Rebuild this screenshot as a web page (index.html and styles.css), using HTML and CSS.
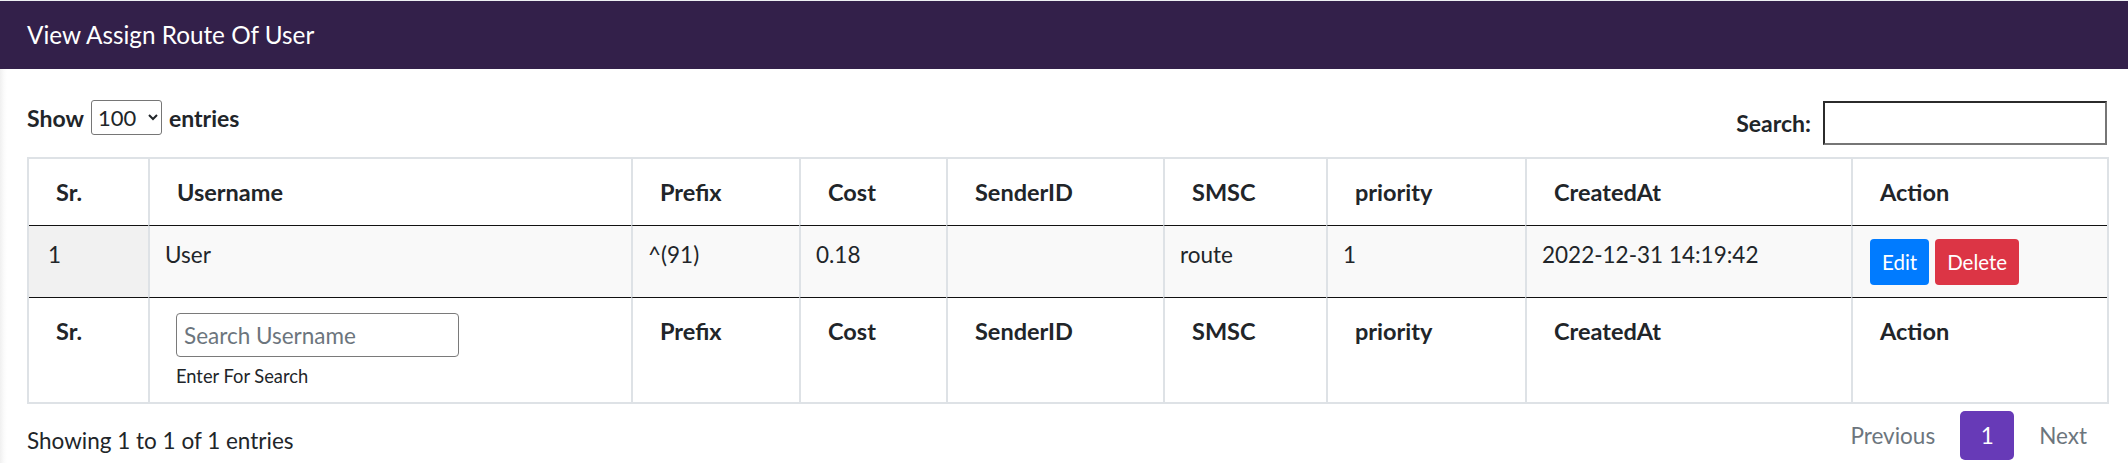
FILE: index.html
```html
<!DOCTYPE html>
<html lang="en">
<head>
<meta charset="utf-8">
<title>View Assign Route Of User</title>
<link rel="stylesheet" href="styles.css">
</head>
<body>
<div class="card">
  <div class="card-header">
    <h3 class="card-title">View Assign Route Of User</h3>
  </div>
  <div class="card-body">
    <div class="dt-top">
      <label class="dt-length">Show
        <select class="dt-select">
          <option>10</option>
          <option>25</option>
          <option>50</option>
          <option selected>100</option>
        </select>
        entries</label>
      <label class="dt-filter">Search: <input type="search" class="dt-search"></label>
    </div>
    <table class="dt-table">
      <colgroup>
        <col class="c-sr"><col class="c-user"><col class="c-prefix"><col class="c-cost"><col class="c-sender"><col class="c-smsc"><col class="c-prio"><col class="c-created"><col class="c-action">
      </colgroup>
      <thead>
        <tr>
          <th>Sr.</th><th>Username</th><th>Prefix</th><th>Cost</th><th>SenderID</th><th>SMSC</th><th>priority</th><th>CreatedAt</th><th>Action</th>
        </tr>
      </thead>
      <tbody>
        <tr class="odd">
          <td class="sorted">1</td>
          <td>User</td>
          <td>^(91)</td>
          <td>0.18</td>
          <td></td>
          <td>route</td>
          <td>1</td>
          <td>2022-12-31 14:19:42</td>
          <td class="actions"><a class="btn btn-edit">Edit</a><a class="btn btn-delete">Delete</a></td>
        </tr>
      </tbody>
      <tfoot>
        <tr>
          <th>Sr.</th>
          <th class="f-user"><input type="text" class="f-input" placeholder="Search Username"><small class="form-text">Enter For Search</small></th>
          <th>Prefix</th><th>Cost</th><th>SenderID</th><th>SMSC</th><th>priority</th><th>CreatedAt</th><th>Action</th>
        </tr>
      </tfoot>
    </table>
    <div class="dt-bottom">
      <div class="dt-info">Showing 1 to 1 of 1 entries</div>
      <ul class="pagination">
        <li class="page-item disabled"><a class="page-link">Previous</a></li>
        <li class="page-item active"><a class="page-link">1</a></li>
        <li class="page-item disabled"><a class="page-link">Next</a></li>
      </ul>
    </div>
  </div>
</div>
</body>
</html>
```

FILE: styles.css
```css
* { box-sizing: border-box; }

html, body {
  margin: 0;
  padding: 0;
}

body {
  background: #eef0f3;
  padding-top: 1px;
  font-family: "Lato", "Liberation Sans", sans-serif;
  font-size: 22.5px;
  line-height: 32px;
  color: #212529;
}

.card {
  background: #fff;
}

.card-header {
  background: #33204a;
  height: 68px;
  display: flex;
  align-items: center;
  padding: 0 27px;
}

.card-title {
  margin: 0;
  color: #fff;
  font-weight: 400;
  font-size: 24.3px;
  line-height: 32px;
}

.card-body {
  background: linear-gradient(to right, #f0f0f0 0, #fbfbfb 4px, #fff 7px);
  padding: 31px 19px 3px 27px;
}

.dt-top {
  display: flex;
  justify-content: space-between;
  align-items: flex-start;
  height: 57px;
}

.dt-length, .dt-filter {
  font-weight: 700;
  font-size: 23px;
  display: flex;
  align-items: center;
  gap: 7px;
}

.dt-length {
  height: 35px;
}

.dt-select {
  height: 35px;
  width: 71px;
  font-family: "Lato", "Liberation Sans", sans-serif;
  font-size: 22px;
  color: #212529;
  border: 1px solid #767676;
  border-radius: 3px;
  background: #fff;
  padding: 0 2px;
}

.dt-filter {
  margin-top: 1px;
  height: 44px;
  gap: 12px;
}

.dt-search {
  width: 284px;
  height: 44px;
  border-style: solid;
  border-width: 2px;
  border-color: #2b2b2b #767676 #767676 #2b2b2b;
  background: #fff;
  font-size: 21px;
  margin-right: 2px;
}

.dt-table {
  width: 2082px;
  table-layout: fixed;
  border-collapse: separate;
  border-spacing: 0;
  border: 2px solid #dee2e6;
}

.c-sr { width: 119px; }
.c-user { width: 483px; }
.c-prefix { width: 168px; }
.c-cost { width: 147px; }
.c-sender { width: 217px; }
.c-smsc { width: 163px; }
.c-prio { width: 199px; }
.c-created { width: 326px; }
.c-action { width: 256px; }

.dt-table th, .dt-table td {
  border-left: 2px solid #dee2e6;
  vertical-align: top;
  text-align: left;
}

.dt-table th:first-child, .dt-table td:first-child {
  border-left: 0;
}

.dt-table th {
  font-weight: 700;
  font-size: 23.5px;
  padding: 17px 20px 17px 27px;
}

.dt-table thead th {
  border-bottom: 1px solid #111;
}

.dt-table tfoot th {
  border-top: 1px solid #111;
}

.dt-table td {
  padding: 13px 15px 12px 15px;
}

.dt-table tr.odd td {
  background: #f9f9f9;
}

.dt-table tr.odd td.sorted {
  background: #f1f1f1;
  padding-left: 19px;
}

.actions {
  white-space: nowrap;
}

.btn {
  display: inline-block;
  height: 46px;
  line-height: 46px;
  padding: 0 12px;
  border-radius: 4px;
  color: #fff;
  font-weight: 400;
  font-size: 20.5px;
  vertical-align: top;
}

.btn-edit {
  background: #007bff;
  margin-left: 2px;
  margin-right: 6px;
}

.btn-delete {
  background: #dc3545;
}

.dt-table tfoot th.f-user {
  padding-top: 15px;
  padding-bottom: 12px;
  padding-left: 26px;
}

.f-input {
  display: block;
  width: 283px;
  height: 44px;
  border: 1px solid #7a7a7a;
  border-radius: 4px;
  padding: 0 7px;
  font-family: "Lato", "Liberation Sans", sans-serif;
  font-size: 22.5px;
  color: #495057;
}

.f-input::placeholder {
  color: #6c757d;
}

.form-text {
  display: block;
  margin-top: 5px;
  font-size: 18.3px;
  line-height: 28px;
  font-weight: 400;
  color: #212529;
}

.dt-bottom {
  display: flex;
  justify-content: space-between;
  align-items: flex-start;
  margin-top: 7px;
  height: 49px;
}

.dt-info {
  color: #212529;
  padding-top: 14px;
}

.pagination {
  display: flex;
  list-style: none;
  margin: 0 6px 0 0;
  padding: 0;
  gap: 9px;
}

.page-link {
  display: block;
  height: 49px;
  line-height: 49px;
  padding: 0 16px;
  color: #6c757d;
  border-radius: 5px;
}

.page-item.active .page-link {
  background: #673ab7;
  color: #fff;
  padding: 0 20px;
  min-width: 54px;
  text-align: center;
}
```
